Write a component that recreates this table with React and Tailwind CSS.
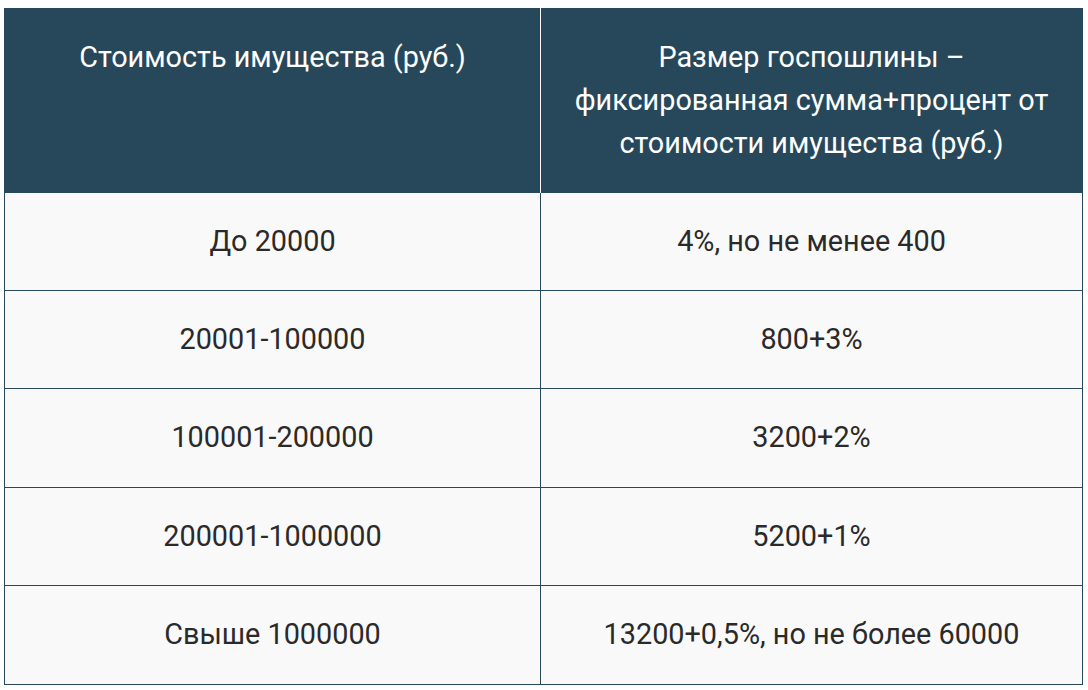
export default function App() {
  const rows = [
    ["До 20000", "4%, но не менее 400", "h-[98px]"],
    ["20001-100000", "800+3%", "h-[98px]"],
    ["100001-200000", "3200+2%", "h-[99px]"],
    ["200001-1000000", "5200+1%", "h-[98px]"],
    ["Свыше 1000000", "13200+0,5%, но не более 60000", "h-[99px]"],
  ];
  return (
    <div className="w-[1088px] h-[690px] bg-white pl-[4px] pt-[8px]" style={{ fontFamily: "Roboto, 'Liberation Sans', sans-serif" }}>
      <div className="w-[1079px] border-x border-[#26485a] bg-[#f9f9f9]">
        <div className="flex h-[185px] bg-[#26485a] text-white text-[28.8px] leading-[43.2px] text-center">
          <div className="w-[535px] pt-[28px]">Стоимость имущества (руб.)</div>
          <div className="flex-1 border-l border-[#f9f9f9] pt-[28px] px-[16px]">
            Размер госпошлины –<br />фиксированная сумма+процент от<br />стоимости имущества (руб.)
          </div>
        </div>
        {rows.map((r, i) => (
          <div key={i} className={"flex border-b border-[#26485a] text-[28.8px] text-[#2a2a2a] text-center items-stretch " + r[2]}>
            <div className="w-[535px] flex items-center justify-center">{r[0]}</div>
            <div className="flex-1 border-l border-[#26485a] flex items-center justify-center">{r[1]}</div>
          </div>
        ))}
      </div>
    </div>
  );
}
